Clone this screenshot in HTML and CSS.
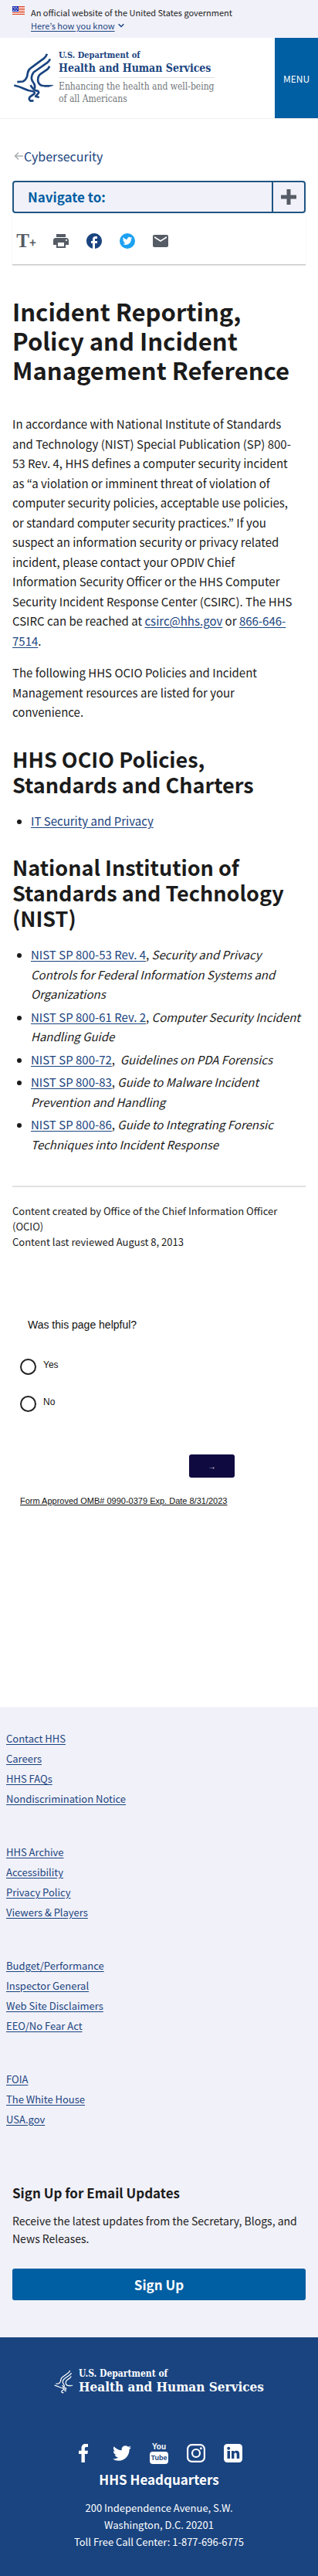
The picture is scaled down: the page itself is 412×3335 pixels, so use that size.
FILE: index.html
```html
<!DOCTYPE html>
<html lang="en">
<head>
<meta charset="utf-8">
<meta name="viewport" content="width=device-width, initial-scale=1">
<title>Incident Reporting, Policy and Incident Management Reference | HHS.gov</title>
<link rel="stylesheet" href="styles.css">
</head>
<body>
<svg class="sprite" aria-hidden="true">
  <symbol id="eagle" viewBox="50 86 160 194">
    <g fill="none" stroke="currentColor" stroke-width="8" stroke-linejoin="round">
      <path d="M182 90Q180 102 162 114L120 145Q109 152 107 165Q105 190 88 198L66 200"/>
      <path d="M194 110Q192 120 176 130L136 158Q123 166 122 186Q123 196 131 205Q137 213 134 226"/>
      <path d="M192 138Q190 147 178 155L158 168Q146 176 147 195Q149 209 162 214L182 217"/>
      <path d="M54 213Q76 218 92 226T124 236Q137 238 133 246L116 258Q109 268 118 274L130 273"/>
      <path d="M118 212Q126 228 140 234Q154 236 149 244L138 256L152 260"/>
      <path d="M176 213L206 213L186 219Z" fill="currentColor" stroke-width="3"/>
    </g>
  </symbol>
</svg>

<section class="banner" aria-label="Official government website">
  <svg class="flag" viewBox="0 0 16 11" aria-hidden="true">
    <path fill="#fff" d="M0 0h16v11H0z"/>
    <path stroke="#db3e1f" d="M0 .5h16M0 2.5h16M0 4.5h16M0 6.5h16M0 8.5h16M0 10.5h16"/>
    <path fill="#1e33b1" d="M0 0h8v7H0z"/>
    <path stroke="#fff" stroke-dasharray="1 1" d="M1 1.5h6M2 3.5h5M1 5.5h6"/>
  </svg>
  <div>
    <p>An official website of the United States government</p>
    <button class="banner-toggle" type="button"><span>Here’s how you know</span>
      <svg viewBox="0 0 8 6" aria-hidden="true"><path fill="none" stroke="currentColor" stroke-width="1.5" d="M.7 1.2L4 4.5l3.300-3.300"/></svg>
    </button>
  </div>
</section>

<header class="header">
  <a class="brand" href="#">
    <svg class="brand-eagle" aria-hidden="true"><use href="#eagle"/></svg>
    <span class="brand-text">
      <span class="brand-dept">U.S. Department of</span>
      <span class="brand-name">Health and Human Services</span>
      <span class="brand-tag">Enhancing the health and well-being<br>of all Americans</span>
    </span>
  </a>
  <button class="menu" type="button">MENU</button>
</header>

<main class="main">
  <nav aria-label="Breadcrumb">
    <a class="crumb" href="#"><svg viewBox="0 0 12 12" aria-hidden="true"><path fill="none" stroke="#a9aeb1" stroke-width="1.500" d="M12 6H2M6 1.500L1.500 6 6 10.500"/></svg>Cybersecurity</a>
  </nav>

  <button class="navigate" type="button">
    <span class="navigate-label">Navigate to:</span>
    <span class="navigate-plus"><svg viewBox="0 0 20 20" aria-hidden="true"><path fill="#565c65" d="M7.500 0h5v7.500H20v5h-7.500V20h-5v-7.500H0v-5h7.500z"/></svg></span>
  </button>

  <div class="tools">
    <button class="tool tool-text" type="button" aria-label="Resize text"><span class="big">T</span><span class="plus">+</span></button>
    <button class="tool" type="button" aria-label="Print">
      <svg viewBox="2 2 20 20"><path fill="#565c65" d="M19 8H5c-1.660 0-3 1.340-3 3v6h4v4h12v-4h4v-6c0-1.660-1.340-3-3-3zm-3 11H8v-5h8v5zm3-7c-.55 0-1-.45-1-1s.45-1 1-1 1 .45 1 1-.45 1-1 1zm-1-9H6v4h12V3z"/></svg>
    </button>
    <a class="tool" href="#" aria-label="Share on Facebook">
      <svg viewBox="2 2 20 20"><path fill="#1a4480" d="M22 12c0-5.520-4.480-10-10-10S2 6.480 2 12c0 4.840 3.440 8.870 8 9.800V15H8v-3h2V9.500C10 7.570 11.570 6 13.500 6H16v3h-2c-.55 0-1 .45-1 1v2h3v3h-3v6.950c5.050-.5 9-4.760 9-9.950z"/></svg>
    </a>
    <a class="tool" href="#" aria-label="Share on Twitter">
      <svg viewBox="0 0 20 20"><circle cx="10" cy="10" r="10" fill="#1da1f2"/><path fill="#fff" transform="translate(3.800 3.700) scale(.52)" d="M23.950 4.570a10 10 0 0 1-2.820.77 4.960 4.960 0 0 0 2.160-2.720c-.95.55-2 .96-3.130 1.180a4.920 4.920 0 0 0-8.380 4.480C7.690 8.090 4.070 6.130 1.640 3.160a4.820 4.820 0 0 0-.67 2.480c0 1.710.87 3.210 2.190 4.100a4.900 4.900 0 0 1-2.230-.62v.06a4.920 4.920 0 0 0 3.950 4.830 5 5 0 0 1-2.210.08 4.940 4.940 0 0 0 4.600 3.420A9.870 9.870 0 0 1 0 19.540a14 14 0 0 0 7.550 2.210c9.050 0 14-7.500 14-13.980 0-.21 0-.42-.02-.63a9.940 9.940 0 0 0 2.460-2.550z"/></svg>
    </a>
    <a class="tool" href="#" aria-label="Share by email">
      <svg viewBox="2 2 20 20"><path fill="#565c65" d="M20 4H4c-1.100 0-2 .9-2 2v12c0 1.100.9 2 2 2h16c1.100 0 2-.9 2-2V6c0-1.100-.9-2-2-2zm0 4l-8 5-8-5V6l8 5 8-5v2z"/></svg>
    </a>
  </div>

  <article class="article">
    <h1>Incident Reporting, Policy and Incident Management Reference</h1>
    <p>In accordance with National Institute of Standards and Technology (NIST) Special Publication (SP) 800-53 Rev. 4, HHS defines a computer security incident as “a violation or imminent threat of violation of computer security policies, acceptable use policies, or standard computer security practices.” If you suspect an information security or privacy related incident, please contact your OPDIV Chief Information Security Officer or the HHS Computer Security Incident Response Center (CSIRC). The HHS CSIRC can be reached at <a href="#">csirc@hhs.gov</a> or <a href="#">866-646-7514</a>.</p>
    <p>The following HHS OCIO Policies and Incident Management resources are listed for your convenience.</p>
    <h2>HHS OCIO Policies, Standards and Charters</h2>
    <ul>
      <li><a href="#">IT Security and Privacy</a></li>
    </ul>
    <h2>National Institution of Standards and Technology (NIST)</h2>
    <ul>
      <li><a href="#">NIST SP 800-53 Rev. 4</a>, <em>Security and Privacy Controls for Federal Information Systems and Organizations</em></li>
      <li><a href="#">NIST SP 800-61 Rev. 2</a>, <em>Computer Security Incident Handling Guide</em></li>
      <li><a href="#">NIST SP 800-72</a>,&nbsp; <em>Guidelines on PDA Forensics</em></li>
      <li><a href="#">NIST SP 800-83</a>, <em>Guide to Malware Incident Prevention and Handling</em></li>
      <li><a href="#">NIST SP 800-86</a>, <em>Guide to Integrating Forensic Techniques into Incident Response</em></li>
    </ul>
  </article>

  <div class="meta">
    <p>Content created by Office of the Chief Information Officer (OCIO)</p>
    <p>Content last reviewed August 8, 2013</p>
  </div>

  <form class="survey">
    <fieldset>
      <legend>Was this page helpful?</legend>
      <label><input type="radio" name="helpful" value="yes"><span>Yes</span></label>
      <label><input type="radio" name="helpful" value="no"><span>No</span></label>
    </fieldset>
    <button class="survey-next" type="button" aria-label="Next">→</button>
    <a class="survey-omb" href="#">Form Approved OMB# 0990-0379 Exp. Date 8/31/2023</a>
  </form>
</main>

<footer>
  <div class="foot-light">
    <nav class="foot-links" aria-label="Footer">
      <ul>
        <li><a href="#">Contact HHS</a></li>
        <li><a href="#">Careers</a></li>
        <li><a href="#">HHS FAQs</a></li>
        <li><a href="#">Nondiscrimination Notice</a></li>
      </ul>
      <ul>
        <li><a href="#">HHS Archive</a></li>
        <li><a href="#">Accessibility</a></li>
        <li><a href="#">Privacy Policy</a></li>
        <li><a href="#">Viewers &amp; Players</a></li>
      </ul>
      <ul>
        <li><a href="#">Budget/Performance</a></li>
        <li><a href="#">Inspector General</a></li>
        <li><a href="#">Web Site Disclaimers</a></li>
        <li><a href="#">EEO/No Fear Act</a></li>
      </ul>
      <ul>
        <li><a href="#">FOIA</a></li>
        <li><a href="#">The White House</a></li>
        <li><a href="#">USA.gov</a></li>
      </ul>
    </nav>
    <section class="signup">
      <h3>Sign Up for Email Updates</h3>
      <p>Receive the latest updates from the Secretary, Blogs, and News Releases.</p>
      <button class="signup-button" type="button">Sign Up</button>
    </section>
  </div>
  <div class="foot-dark">
    <a class="foot-brand" href="#">
      <svg class="foot-eagle" aria-hidden="true"><use href="#eagle"/></svg>
      <span class="foot-brand-text"><span class="foot-dept">U.S. Department of</span><span class="foot-name">Health and Human Services</span></span>
    </a>
    <div class="social">
      <a href="#" aria-label="Facebook"><svg viewBox="0 0 24 24"><path fill="#fff" d="M7.500 24V13H4V8.800h3.500V5.600C7.500 2 9.600 0 12.700 0H16v4h-2.200c-1.400 0-1.900.7-1.900 1.900v2.900H16l-.6 4.200h-3.500v11z"/></svg></a>
      <a href="#" aria-label="Twitter"><svg viewBox="0 0 24 24"><path fill="#fff" d="M23.950 4.570a10 10 0 0 1-2.820.77 4.960 4.960 0 0 0 2.160-2.720c-.95.55-2 .96-3.130 1.180a4.920 4.920 0 0 0-8.380 4.480C7.690 8.090 4.070 6.130 1.640 3.160a4.820 4.820 0 0 0-.67 2.480c0 1.710.87 3.210 2.190 4.100a4.900 4.900 0 0 1-2.230-.62v.06a4.920 4.920 0 0 0 3.950 4.830 5 5 0 0 1-2.210.08 4.940 4.940 0 0 0 4.600 3.420A9.870 9.870 0 0 1 0 19.540a14 14 0 0 0 7.550 2.210c9.050 0 14-7.500 14-13.980 0-.21 0-.42-.02-.63a9.940 9.940 0 0 0 2.460-2.550z"/></svg></a>
      <a class="youtube" href="#" aria-label="YouTube"><span class="you">You</span><span class="tube">Tube</span></a>
      <a href="#" aria-label="Instagram"><svg viewBox="0 0 24 24"><g fill="none" stroke="#fff" stroke-width="2.200"><rect x="1.100" y="1.100" width="21.800" height="21.800" rx="5.500"/><circle cx="12" cy="12" r="5"/></g><circle cx="18.300" cy="5.700" r="1.500" fill="#fff"/></svg></a>
      <a href="#" aria-label="LinkedIn"><svg viewBox="0 0 24 24"><rect width="24" height="24" rx="4.500" fill="#fff"/><g fill="#1a4480"><circle cx="6.200" cy="5.700" r="2"/><path d="M4.500 9h3.500v10H4.500zM10 9h3.300v1.400c.7-1 1.700-1.700 3.200-1.700 2.600 0 3.700 1.700 3.700 4.500V19h-3.500v-5.200c0-1.300-.4-2.200-1.500-2.200-1.200 0-1.800.9-1.800 2.200V19H10z"/></g></svg></a>
    </div>
    <h3>HHS Headquarters</h3>
    <address>200 Independence Avenue, S.W.<br>Washington, D.C. 20201<br>Toll Free Call Center: 1-877-696-6775</address>
  </div>
</footer>
</body>
</html>
```

FILE: styles.css
```css
* { box-sizing: border-box; }

body {
  margin: 0;
  background: #fff;
  color: #1b1b1b;
  font-family: "Noto Sans CJK KR", "Noto Sans", sans-serif;
  font-size: 15px;
  line-height: 1.7;
}

h1, h2, h3, p, ul { margin: 0; padding: 0; }
a { color: #1a4480; text-underline-offset: 2px; }
button { font-family: inherit; cursor: pointer; }
svg { display: block; }
.sprite { position: absolute; width: 0; height: 0; }

.banner {
  display: flex;
  gap: 8px;
  padding: 8px 16px;
  background: #f1f1f9;
  font-size: 11px;
  line-height: 16px;
}
.banner p { margin-bottom: 1px; }
.flag { width: 16px; height: 11px; }
.banner-toggle {
  display: flex;
  align-items: center;
  gap: 4px;
  padding: 0;
  border: 0;
  background: none;
  color: #1a4480;
  font-size: 11px;
  line-height: 16px;
}
.banner-toggle span { text-decoration: underline; text-underline-offset: 2px; }
.banner-toggle svg { width: 8px; height: 6px; }

.header {
  display: flex;
  justify-content: space-between;
  border-bottom: 1px solid #f0f0f0;
}
.brand {
  display: flex;
  gap: 6px;
  padding: 16px 0 17px 17px;
  align-items: center;
  text-decoration: none;
  font-family: "DejaVu Serif Condensed", "DejaVu Serif", serif;
}
.brand-eagle { width: 53px; height: 65px; }
.brand-text > span { display: block; }
.brand-dept { font-size: 11px; line-height: 14px; font-weight: bold; }
.brand-name {
  padding-bottom: 3px;
  border-bottom: 1px solid #dfe1e2;
  font-size: 14px;
  line-height: 18px;
  font-weight: bold;
}
.brand-tag { padding-top: 3px; font-size: 12px; line-height: 16px; color: #71767a; }
.menu {
  width: 56px;
  height: 104px;
  padding: 0;
  border: 0;
  background: #005ea2;
  color: #fff;
  font-size: 12px;
}

.main { padding: 35px 16px 0; }
.crumb {
  display: inline-flex;
  align-items: center;
  gap: 1px;
  padding-left: 2px;
  font-size: 16px;
  line-height: 26px;
  text-decoration: none;
}
.crumb svg { width: 12px; height: 12px; }

.navigate {
  display: flex;
  width: 100%;
  height: 42px;
  margin-top: 19px;
  padding: 0;
  border: 2px solid #1f5583;
  border-radius: 4px;
  background: #f1f1f9;
}
.navigate-label {
  flex: 1;
  padding-left: 18px;
  color: #005ea2;
  font-size: 17px;
  font-weight: bold;
  line-height: 37px;
  text-align: left;
}
.navigate-plus {
  display: grid;
  place-items: center;
  width: 42px;
  height: 38px;
  border-left: 2px solid #1f5583;
}
.navigate-plus svg { width: 20px; height: 20px; }

.tools {
  display: flex;
  gap: 19px;
  padding: 24px 6px 18px;
  border-bottom: 1px solid #c9c9c9;
  box-shadow: 0 1px 1px #e6e6e6;
}
.tool {
  display: grid;
  place-items: center;
  width: 24px;
  height: 24px;
  padding: 0;
  border: 0;
  background: none;
}
.tool svg { width: 20px; height: 20px; }
.tool-text {
  display: flex;
  align-items: baseline;
  justify-content: center;
  margin: 0 2px 0 0;
  color: #565c65;
  font-weight: bold;
}
.big { font-family: "Liberation Serif", serif; font-size: 25px; line-height: 24px; }
.plus { font-size: 15px; line-height: 24px; }

.article { padding-top: 41px; }
h1 { margin-bottom: 38px; font-size: 31px; line-height: 38px; }
.article p { margin: 0 13px 16px 0; }
h2 { margin: 31px 0 18px; font-size: 27px; line-height: 33px; }
.article ul { padding-left: 24px; }
.article li { margin-bottom: 4px; }

.meta {
  margin-top: 41px;
  padding-top: 21px;
  border-top: 2px solid #dfe1e2;
  font-size: 13px;
  line-height: 20px;
}

.survey {
  display: flex;
  flex-direction: column;
  padding: 87px 10px 0;
  color: #111;
  font-family: "Liberation Sans", Arial, sans-serif;
  font-size: 12px;
  line-height: 16px;
}
.survey fieldset { margin: 0; padding: 0; border: 0; }
.survey legend { padding: 0 10px 34px; font-size: 14px; line-height: 20px; }
.survey label { display: flex; gap: 9px; margin-bottom: 27px; }
.survey input {
  appearance: none;
  width: 21px;
  height: 21px;
  margin: 0;
  border: 2px solid #222;
  border-radius: 50%;
}
.survey-next {
  align-self: flex-start;
  width: 59px;
  height: 30px;
  margin: 28px 0 0 219px;
  border: 0;
  border-radius: 3px;
  background: #0f0a40;
  color: #fff;
  font-size: 10px;
}
.survey-omb { margin-top: 22px; color: #111; font-size: 11px; text-underline-offset: 1px; }

.foot-light { margin-top: 259px; padding-bottom: 48px; background: #f1f1f9; }
.foot-links {
  display: grid;
  gap: 43px;
  padding: 28px 8px 0;
  font-size: 13px;
  line-height: 26px;
}
.foot-links ul { list-style: none; }
.signup { padding: 70px 16px 0; font-size: 14px; line-height: 23px; }
h3 { font-size: 17px; line-height: 24px; }
.signup h3 { margin-bottom: 13px; }
.signup-button {
  width: 100%;
  height: 41px;
  margin-top: 27px;
  padding: 0;
  border: 0;
  border-radius: 3px;
  background: #005ea2;
  color: #fff;
  font-size: 17px;
  font-weight: bold;
}

.foot-dark {
  padding: 40px 16px 34px;
  background: #1a4480;
  color: #fff;
  text-align: center;
}
.foot-brand {
  display: flex;
  align-items: center;
  justify-content: center;
  gap: 7px;
  color: #fff;
  text-decoration: none;
  font-family: "DejaVu Serif Condensed", "DejaVu Serif", serif;
  font-weight: bold;
  text-align: left;
}
.foot-brand-text > span { display: block; }
.foot-eagle { width: 25px; height: 31px; }
.foot-dept { font-size: 12px; line-height: 14px; }
.foot-name { font-size: 17px; line-height: 20px; }
.social { display: flex; justify-content: center; gap: 24px; padding: 61px 0 7px; }
.social a { width: 24px; height: 30px; padding-top: 3px; }
.social svg { width: 24px; height: 24px; }
.social .youtube {
  padding: 0;
  color: #fff;
  font-family: "Liberation Sans", Arial, sans-serif;
  font-weight: bold;
  font-size: 10px;
  line-height: 13px;
  text-decoration: none;
}
.youtube span { display: block; }
.tube { border-radius: 4px; background: #fff; color: #1a4480; font-size: 9px; line-height: 16px; }
address { margin-top: 14px; font-size: 13px; font-style: normal; line-height: 22px; }
```
